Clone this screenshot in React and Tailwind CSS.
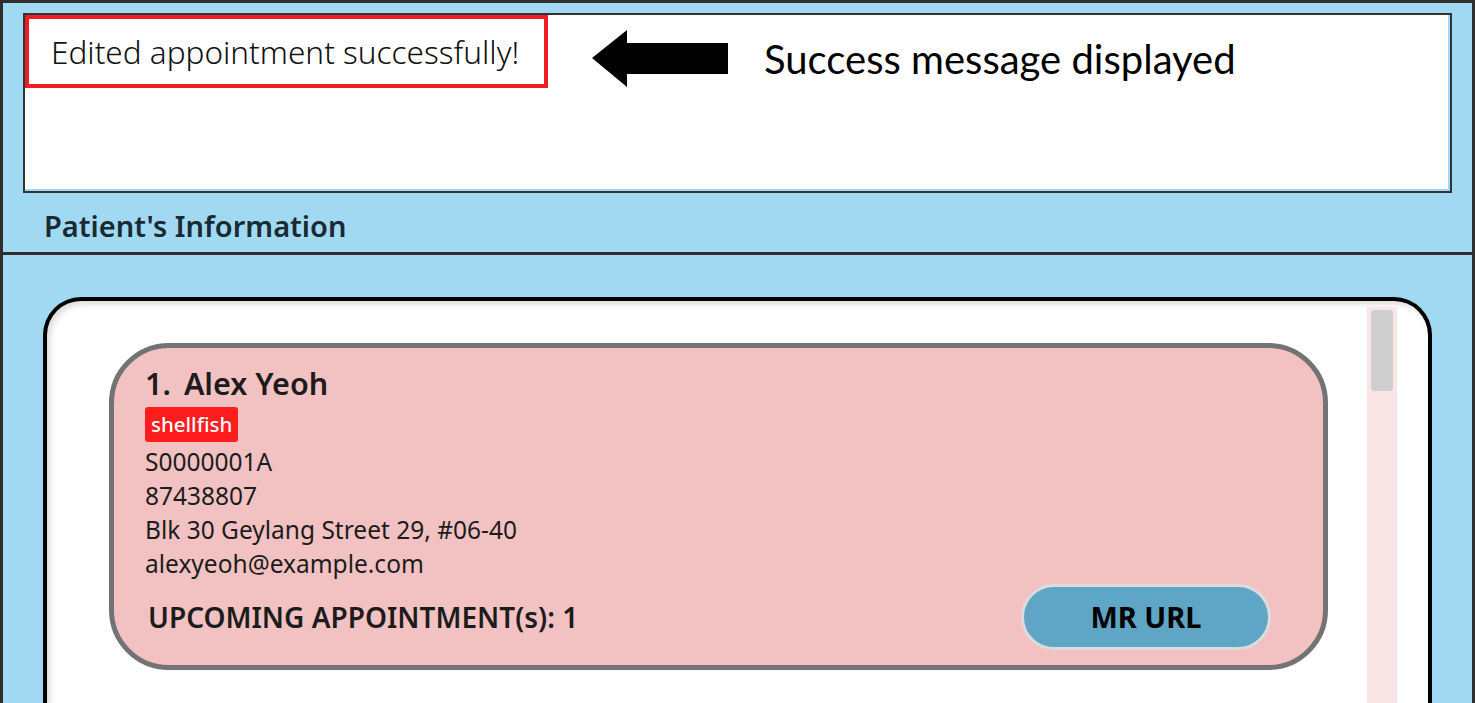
import React from 'react'

const details = ['S0000001A', '87438807', 'Blk 30 Geylang Street 29, #06-40', 'alexyeoh@example.com']

function Arrow() {
  return (
    <svg width="136" height="58" viewBox="0 0 136 58" aria-hidden>
      <path d="M0 28 L35 0 L35 13 L136 13 L136 44 L35 44 L35 57 Z" fill="#000" />
    </svg>
  )
}

function PatientCard() {
  return (
    <div className="rounded-[60px] border-[5px] border-[#737373] bg-[#f2c2c2] pl-[31px] pr-[52px] pt-[16px] pb-[15px] text-[#1c1c1c]">
      <div className="text-[30.5px] font-semibold leading-[38px]">
        1.<span className="ml-[13px]">Alex Yeoh</span>
      </div>
      <div className="mt-[5px] flex">
        <span className="flex h-[35px] items-center rounded-[3px] bg-[#ff1c1c] px-[6px] text-[20.5px] font-medium text-white">shellfish</span>
      </div>
      <div className="mt-[3px] text-[24.5px] leading-[34px]">
        {details.map((d) => (
          <div key={d}>{d}</div>
        ))}
      </div>
      <div className="mt-[3px] flex items-center justify-between">
        <div className="pl-[3px] text-[28px] font-semibold">UPCOMING APPOINTMENT(s): 1</div>
        <button className="h-[66px] w-[250px] rounded-full border-[3px] border-[#dcdcdc] bg-[#5fa5c6] text-[29px] font-bold text-black">
          MR URL
        </button>
      </div>
    </div>
  )
}

export default function App() {
  return (
    <div
      className="h-[703px] w-full overflow-hidden border-x-[3px] border-t-[3px] border-[#2f2f2f] bg-[#a1d9f2]"
      style={{ fontFamily: '"Noto Sans", "Open Sans", sans-serif' }}
    >
      <div className="px-[20px] pt-[10px]">
        <div className="relative h-[180px] border-2 border-[#333] bg-white shadow-[inset_-2px_-2px_0_#a1d9f2]">
          <div className="flex items-start">
            <div className="flex h-[73px] w-[523px] items-center border-4 border-[#ee1c25] pl-[22px]">
              <span className="text-[31.5px] font-light text-[#111]">Edited appointment successfully!</span>
            </div>
            <div className="ml-[44px] mt-[15px]">
              <Arrow />
            </div>
            <div className="ml-[36px] mt-[20px] text-[40px] leading-[48px] text-black" style={{ fontFamily: 'Lato, sans-serif' }}>
              Success message displayed
            </div>
          </div>
        </div>
        <div className="pl-[21px] pt-[15px] pb-[8px] text-[29px] font-semibold leading-[36px] text-[#1a2a33]">
          Patient's Information
        </div>
      </div>
      <div className="h-[3px] bg-[#2f2f2f]" />
      <div className="px-[40px] pt-[42px]">
        <div className="flex h-[420px] rounded-t-[38px] border-x-4 border-t-4 border-black bg-white pl-[62px] shadow-[inset_3px_3px_6px_rgba(0,0,0,0.15)]">
          <div className="flex-1 pt-[42px] pr-[39px]">
            <PatientCard />
          </div>
          <div className="w-[30px] bg-[#f9e5e5] px-[4px] pt-[3px] mt-[6px] mr-[31px]">
            <div className="h-[81px] rounded-[4px] bg-[#cfcfcf]" />
          </div>
        </div>
      </div>
    </div>
  )
}
